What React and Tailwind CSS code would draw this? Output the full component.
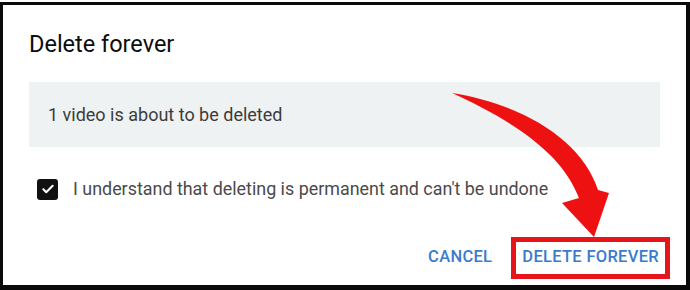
export default function App() {
  return (
    <div className="relative w-[690px] h-[290px] bg-white overflow-hidden" style={{ fontFamily: "Roboto, 'Liberation Sans', sans-serif" }}>
      <div className="mt-[2px] h-[288px] border-t-[3px] border-l-[3px] border-r-[4px] border-b-[5px] border-[#0a0a0a] bg-white flex flex-col">
        <div className="pl-[26px] pr-[26px] pt-[26px] flex flex-col">
          <h1 className="text-[23.5px] leading-[26px] text-[#0d0d0d]">Delete forever</h1>
          <div className="mt-[25px] h-[65px] bg-[#eff2f3] flex items-center pl-[19px]">
            <span className="text-[18px] text-[#3c3c3c]">1 video is about to be deleted</span>
          </div>
          <div className="mt-[29px] flex items-center pl-[8px]">
            <div className="w-[21px] h-[21px] rounded-[3px] bg-[#111] flex items-center justify-center">
              <svg width="14" height="14" viewBox="0 0 24 24" fill="none" stroke="white" strokeWidth="3.5" strokeLinecap="round" strokeLinejoin="round">
                <path d="M4 12.5l5 5L20 6.5" />
              </svg>
            </div>
            <span className="ml-[15px] text-[17.9px] text-[#4a4a4a]">I understand that deleting is permanent and can't be undone</span>
          </div>
          <div className="mt-[34px] flex justify-end items-center mr-[-10px]">
            <button className="text-[16.5px] font-medium text-[#3b7bce] tracking-[0.3px] mr-[19px]">CANCEL</button>
            <button className="border-[5px] border-[#e8141c] px-[6px] h-[42px] text-[16.5px] font-medium text-[#3b7bce] tracking-[0.3px]">DELETE FOREVER</button>
          </div>
        </div>
      </div>
      <svg className="absolute left-0 top-0" width="690" height="290" viewBox="0 0 690 290">
        <path d="M452,93 C522,104 582,140 598,190 L609,193 L594,237 L562,203 L579,198 C563,156 520,124 452,93 Z" fill="#ee1111" />
      </svg>
    </div>
  );
}
